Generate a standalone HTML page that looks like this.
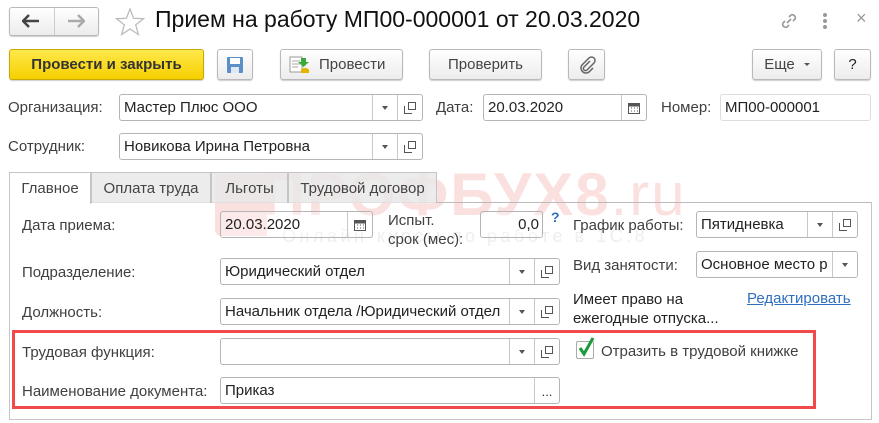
<!DOCTYPE html>
<html><head><meta charset="utf-8"><style>
*{box-sizing:border-box;margin:0;padding:0}
body{width:879px;height:423px;background:#fff;position:relative;overflow:hidden;font-family:"Liberation Sans",Arial,sans-serif;font-size:15px;color:#404040}
.a{position:absolute}
.btn{position:absolute;border:1px solid #b9b9b9;border-radius:3px;background:linear-gradient(#fff,#ececec);box-shadow:0 1px 1px rgba(0,0,0,.2);color:#444;font-size:15px;display:flex;align-items:center;justify-content:center}
.in{position:absolute;border:1px solid #b5b5b5;border-radius:3px;background:#fff;height:27px;color:#222;font-size:15px;line-height:25px;padding-left:4px;white-space:nowrap;overflow:hidden}
.dd,.op,.cal{position:absolute;top:0;height:25px;width:25px;border-left:1px solid #c8c8c8;display:flex;align-items:center;justify-content:center}
.dd::after{content:"";border-left:3.5px solid transparent;border-right:3.5px solid transparent;border-top:4px solid #555}
.lbl{position:absolute;color:#404040;font-size:15px;white-space:nowrap}
.tab{position:absolute;top:172px;height:31px;border:1px solid #c5c5c5;border-bottom:none;background:rgba(232,232,232,.82);font-size:15px;color:#444;display:flex;align-items:center;justify-content:center}
</style></head><body>
<!-- nav -->
<div class="btn" style="left:9px;top:7px;width:90px;height:29px;padding:0"></div>
<div class="a" style="left:54px;top:8px;width:1px;height:27px;background:#ccc"></div>
<svg class="a" style="left:22px;top:14px" width="18" height="14"><path d="M1 7h16M7 1L1 7l6 6" stroke="#444" stroke-width="2.5" fill="none"/></svg>
<svg class="a" style="left:67px;top:14px" width="18" height="14"><path d="M1 7h16M11 1l6 6-6 6" stroke="#aaa" stroke-width="2.5" fill="none"/></svg>
<svg class="a" style="left:114px;top:7px" width="32" height="30"><path d="M16 2l3.6 9.3 9.9.4-7.8 6.2 2.7 9.6L16 22l-8.4 5.5 2.7-9.6-7.8-6.2 9.9-.4z" fill="none" stroke="#bbb" stroke-width="1.3"/></svg>
<div class="a" style="left:155px;top:6px;font-size:23px;color:#111;white-space:nowrap">Прием на работу МП00-000001 от 20.03.2020</div>
<svg class="a" style="left:778px;top:10px" width="22" height="22"><path d="M9 13l4-4M7 11l-2 2a3 3 0 004 4l2-2M15 11l2-2a3 3 0 00-4-4l-2 2" stroke="#999" stroke-width="1.6" fill="none"/></svg>
<div class="a" style="left:823px;top:13px;width:4px;height:4px;border-radius:2px;background:#999;box-shadow:0 6px 0 #999,0 12px 0 #999"></div>
<div class="a" style="left:856px;top:8px;font-size:18px;color:#999">×</div>
<!-- toolbar -->
<div class="btn" style="left:9px;top:49px;width:195px;height:31px;background:linear-gradient(#ffe84a,#f5d000);border-color:#c9a800;color:#333;font-weight:bold">Провести и закрыть</div>
<div class="btn" style="left:217px;top:49px;width:36px;height:31px"><svg width="18" height="18"><rect x="1" y="1" width="16" height="16" rx="1" fill="#5b8fc7"/><rect x="4" y="2" width="10" height="6" fill="#fff"/><rect x="5" y="11" width="8" height="6" fill="#dfe9f5"/></svg></div>
<div class="btn" style="left:280px;top:49px;width:123px;height:31px;justify-content:flex-start;padding-left:8px"><svg width="22" height="20" style="margin-right:8px"><rect x="1" y="2" width="12" height="15" fill="#fff" stroke="#999"/><path d="M3 6h8M3 9h8M3 12h6" stroke="#aaa"/><path d="M12 3h5v4h3l-5.5 5L9 7h3z" fill="#3aaa3a"/><ellipse cx="16" cy="15" rx="4" ry="2" fill="#e3b400"/><rect x="12" y="15" width="8" height="3" fill="#e3b400"/></svg>Провести</div>
<div class="btn" style="left:429px;top:49px;width:113px;height:31px">Проверить</div>
<div class="btn" style="left:568px;top:49px;width:37px;height:31px"><svg width="18" height="18"><path d="M12 5l-6 6a2 2 0 003 3l7-7a3.5 3.5 0 00-5-5L4 9a5 5 0 007 7l4-4" stroke="#666" stroke-width="1.5" fill="none"/></svg></div>
<div class="btn" style="left:752px;top:49px;width:70px;height:31px">Еще <span style="display:inline-block;margin-left:9px;border-left:3px solid transparent;border-right:3px solid transparent;border-top:3.5px solid #555"></span></div>
<div class="btn" style="left:834px;top:49px;width:37px;height:31px;color:#222">?</div>
<!-- org row -->
<div class="lbl" style="left:8px;top:99px">Организация:</div>
<div class="in" style="left:119px;top:94px;width:304px">Мастер Плюс ООО<div class="dd" style="right:25px"></div><div class="op" style="right:0"><svg width="12" height="12"><rect x="4.5" y="0.5" width="7" height="7" fill="#fff" stroke="#555"/><path d="M0.5 4v7.5H8" stroke="#555" fill="none"/></svg></div></div>
<div class="lbl" style="left:436px;top:99px">Дата:</div>
<div class="in" style="left:483px;top:94px;width:164px">20.03.2020<div class="cal" style="right:0"><svg width="12" height="12"><rect x="0.5" y="1.5" width="11" height="10" fill="none" stroke="#555"/><rect x="0.5" y="1.5" width="11" height="3" fill="#555"/><path d="M3 6h1M6 6h1M9 6h1M3 9h1M6 9h1M9 9h1" stroke="#555"/></svg></div></div>
<div class="lbl" style="left:661px;top:99px">Номер:</div>
<div class="in" style="left:720px;top:94px;width:151px;border-color:#ddd">МП00-000001</div>
<div class="lbl" style="left:8px;top:138px">Сотрудник:</div>
<div class="in" style="left:119px;top:133px;width:304px">Новикова Ирина Петровна<div class="dd" style="right:25px"></div><div class="op" style="right:0"><svg width="12" height="12"><rect x="4.5" y="0.5" width="7" height="7" fill="#fff" stroke="#555"/><path d="M0.5 4v7.5H8" stroke="#555" fill="none"/></svg></div></div>
<!-- watermark (behind) -->
<div class="a" style="left:215px;top:174px;width:52px;height:62px;background:#fbe0e0;border-radius:6px 0 0 6px"></div>
<div class="a" style="left:262px;top:160px;font-size:60px;font-weight:bold;color:#fbe0e0;white-space:nowrap;letter-spacing:2px">ПРОФБУХ8<span style="font-weight:normal">.ru</span></div>
<div class="a" style="left:282px;top:226px;font-size:18px;color:#eeeeee;letter-spacing:3.5px;white-space:nowrap">Онлайн-курсы по работе в 1С:8</div>
<!-- panel -->
<div class="a" style="left:9px;top:202px;width:863px;height:218px;border:1px solid #c5c5c5;border-top-color:#bbb"></div>
<div class="tab" style="left:91px;width:120px">Оплата труда</div>
<div class="tab" style="left:211px;width:77px">Льготы</div>
<div class="tab" style="left:288px;width:149px">Трудовой договор</div>
<div class="tab" style="left:9px;width:82px;background:#fff;height:32px">Главное</div>
<!-- fields -->
<div class="lbl" style="left:22px;top:217px">Дата приема:</div>
<div class="in" style="left:220px;top:211px;width:153px;background:rgba(255,255,255,.3)">20.03.2020<div class="cal" style="right:0"><svg width="12" height="12"><rect x="0.5" y="1.5" width="11" height="10" fill="none" stroke="#555"/><rect x="0.5" y="1.5" width="11" height="3" fill="#555"/><path d="M3 6h1M6 6h1M9 6h1M3 9h1M6 9h1M9 9h1" stroke="#555"/></svg></div></div>
<div class="lbl" style="left:388px;top:211px;line-height:19px">Испыт.<br>срок (мес):</div>
<div class="in" style="left:480px;top:211px;width:63px;text-align:right;padding-right:3px;background:rgba(255,255,255,.3)">0,0</div>
<div class="a" style="left:551px;top:209px;color:#2f6fbf;font-size:14px;font-weight:bold">?</div>
<div class="lbl" style="left:573px;top:217px">График работы:</div>
<div class="in" style="left:696px;top:211px;width:162px">Пятидневка<div class="dd" style="right:25px"></div><div class="op" style="right:0"><svg width="12" height="12"><rect x="4.5" y="0.5" width="7" height="7" fill="#fff" stroke="#555"/><path d="M0.5 4v7.5H8" stroke="#555" fill="none"/></svg></div></div>
<div class="lbl" style="left:22px;top:264px">Подразделение:</div>
<div class="in" style="left:220px;top:258px;width:340px">Юридический отдел<div class="dd" style="right:25px"></div><div class="op" style="right:0"><svg width="12" height="12"><rect x="4.5" y="0.5" width="7" height="7" fill="#fff" stroke="#555"/><path d="M0.5 4v7.5H8" stroke="#555" fill="none"/></svg></div></div>
<div class="lbl" style="left:573px;top:257px">Вид занятости:</div>
<div class="in" style="left:696px;top:251px;width:162px">Основное место р<div class="dd" style="right:0;background:#fff"></div></div>
<div class="lbl" style="left:22px;top:304px">Должность:</div>
<div class="in" style="left:220px;top:298px;width:340px">Начальник отдела /Юридический отдел<div class="dd" style="right:25px;background:#fff"></div><div class="op" style="right:0;background:#fff"><svg width="12" height="12"><rect x="4.5" y="0.5" width="7" height="7" fill="#fff" stroke="#555"/><path d="M0.5 4v7.5H8" stroke="#555" fill="none"/></svg></div></div>
<div class="lbl" style="left:573px;top:290px;line-height:19px;color:#222">Имеет право на<br>ежегодные отпуска...</div>
<div class="lbl" style="left:747px;top:290px;color:#2f6fbf;text-decoration:underline">Редактировать</div>
<!-- red box -->
<div class="a" style="left:12px;top:330px;width:804px;height:79px;border:3px solid #f04a4a"></div>
<div class="lbl" style="left:22px;top:344px">Трудовая функция:</div>
<div class="in" style="left:220px;top:338px;width:340px"><div class="dd" style="right:25px"></div><div class="op" style="right:0"><svg width="12" height="12"><rect x="4.5" y="0.5" width="7" height="7" fill="#fff" stroke="#555"/><path d="M0.5 4v7.5H8" stroke="#555" fill="none"/></svg></div></div>
<div class="a" style="left:576px;top:341px;width:18px;height:18px;border:1px solid #aaa;border-radius:2px;background:#fff"></div>
<svg class="a" style="left:576px;top:336px" width="20" height="22"><path d="M4 12l4 6 9-16" stroke="#1a9a3a" stroke-width="3" fill="none"/></svg>
<div class="lbl" style="left:601px;top:343px">Отразить в трудовой книжке</div>
<div class="lbl" style="left:22px;top:383px">Наименование документа:</div>
<div class="in" style="left:220px;top:377px;width:340px">Приказ<div class="op" style="right:0;font-size:13px;color:#333;align-items:flex-end;padding-bottom:6px;line-height:10px">...</div></div>
</body></html>
